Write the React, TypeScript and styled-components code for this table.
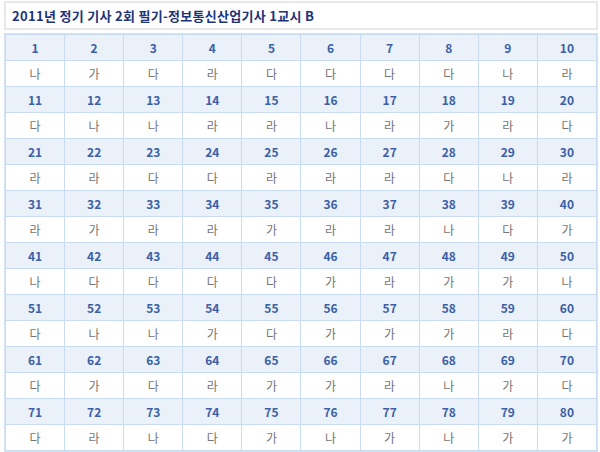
import { Fragment } from 'react'
import styled, { createGlobalStyle } from 'styled-components'

const GlobalStyle = createGlobalStyle`
  html, body {
    margin: 0;
    padding: 0;
    background: #ffffff;
  }
  body {
    font-family: 'Noto Sans CJK KR', 'Noto Sans', sans-serif;
  }
`

const Page = styled.div`
  width: 600px;
  padding: 1px 2px 0 4px;
  box-sizing: border-box;
  display: flex;
  flex-direction: column;
  gap: 3px;
`

const TitleBox = styled.div`
  height: 29px;
  box-sizing: border-box;
  border: 2px solid #e8e8e8;
  display: flex;
  align-items: center;
  padding-left: 6px;
  font-size: 13px;
  font-weight: 700;
  color: #1d3478;
  letter-spacing: 0.3px;
`

const Grid = styled.div`
  display: grid;
  grid-template-columns: repeat(10, 1fr);
  grid-auto-rows: 25px;
  gap: 1px;
  padding: 1px;
  background: #c9dbf2;
  border: 1px solid #d6e3f5;
`

const Cell = styled.div<{ $head?: boolean }>`
  display: flex;
  align-items: center;
  justify-content: center;
  font-size: 12px;
  background: ${({ $head }) => ($head ? '#eaf1f9' : '#ffffff')};
  color: ${({ $head }) => ($head ? '#3d5fa6' : '#747474')};
  font-weight: ${({ $head }) => ($head ? 700 : 400)};
`

const ANSWERS = [
  '나가다라다다다다나라',
  '다나나라라나라가라다',
  '라라다다라라라다나라',
  '라가라라가라라나다가',
  '나다다다다가라가가나',
  '다나나가다가가가라다',
  '다가다라가가라나가다',
  '다라나다가나가나가가',
]

export default function App() {
  return (
    <Page>
      <GlobalStyle />
      <TitleBox>2011년 정기 기사 2회 필기-정보통신산업기사 1교시 B</TitleBox>
      <Grid>
        {ANSWERS.map((row, r) => (
          <Fragment key={r}>
            {Array.from({ length: 10 }, (_, i) => (
              <Cell $head key={`h${i}`}>
                {r * 10 + i + 1}
              </Cell>
            ))}
            {row.split('').map((a, i) => (
              <Cell key={`a${i}`}>{a}</Cell>
            ))}
          </Fragment>
        ))}
      </Grid>
    </Page>
  )
}
